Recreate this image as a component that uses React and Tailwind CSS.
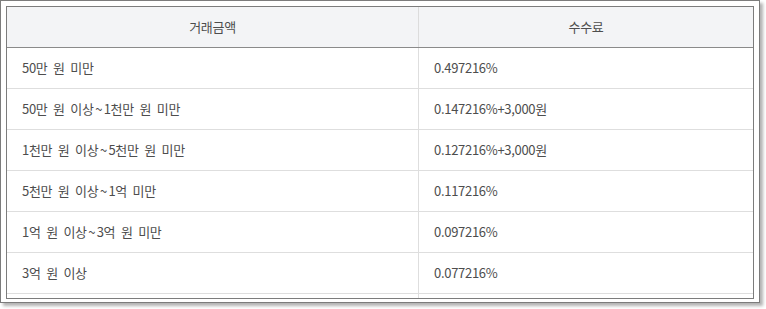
import React from 'react';

const rows = [
  ['50만 원 미만', '0.497216%'],
  ['50만 원 이상~1천만 원 미만', '0.147216%+3,000원'],
  ['1천만 원 이상~5천만 원 미만', '0.127216%+3,000원'],
  ['5천만 원 이상~1억 미만', '0.117216%'],
  ['1억 원 이상~3억 원 미만', '0.097216%'],
  ['3억 원 이상', '0.077216%'],
];

// "~" is a bit wider in the original font
const Amount = ({ text }) => {
  const parts = text.split('~');
  return (
    <span>
      {parts[0]}
      {parts.length > 1 && <span className="px-[1.5px]">~</span>}
      {parts[1]}
    </span>
  );
};

function App() {
  return (
    <div className="w-[766px] h-[309px] bg-white" style={{ fontFamily: '"Noto Sans CJK KR", "Noto Sans", sans-serif' }}>
      <div className="w-[760px] h-[303px] border border-[#7c7c7c] bg-white pt-[5px] px-[5px] pb-[3px] shadow-[3px_3px_3px_rgba(0,0,0,0.3)]">
        <div className="h-[293px] border border-[#7c7c7c] overflow-hidden text-[13px] text-[#4d4d4d] tracking-[-0.3px]">
          <div className="grid grid-cols-[412px_1fr] h-[41px] bg-[#f3f4f6] border-b border-[#8a8a8a]">
            <div className="flex items-center justify-center border-r border-[#dcdcdc]">거래금액</div>
            <div className="flex items-center justify-center">수수료</div>
          </div>
          {rows.map(([amount, fee]) => (
            <div key={amount} className="grid grid-cols-[412px_1fr] h-[41px] border-b border-[#dedede]">
              <div className="flex items-center pl-[15px] border-r border-[#dedede] [word-spacing:3px]">
                <Amount text={amount} />
              </div>
              <div className="flex items-center pl-[15px]">{fee}</div>
            </div>
          ))}
          <div className="grid grid-cols-[412px_1fr] h-[41px]">
            <div className="border-r border-[#dedede]"></div>
            <div></div>
          </div>
        </div>
      </div>
    </div>
  );
}

export default App;
